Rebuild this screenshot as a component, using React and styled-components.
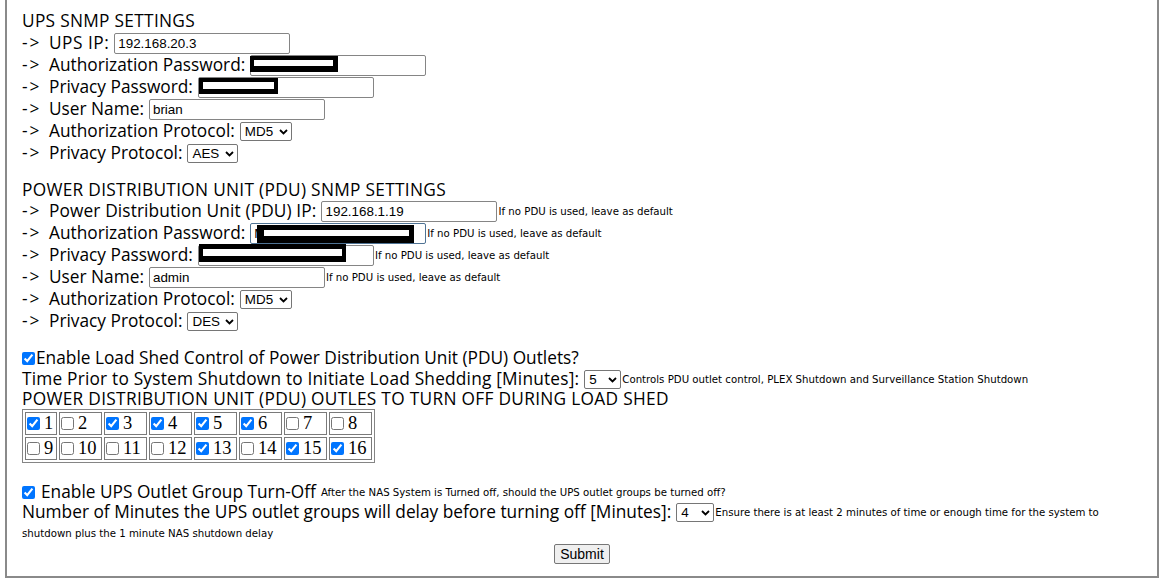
import React from "react";
import styled, { createGlobalStyle } from "styled-components";

const GlobalStyle = createGlobalStyle`
  html, body { margin: 0; padding: 0; background: #ffffff; }
  body { font-family: "Open Sans", "Liberation Sans", Arial, sans-serif; color: #000; }
`;

const Frame = styled.form`
  margin: 0 7px 5px 5px;
  border: 2px solid #8a8a8a;
  border-top: none;
  padding: 11px 15px 12px 15px;
  font-family: "Open Sans", "Liberation Sans", Arial, sans-serif;
  font-size: 17.3px;
  line-height: 1.08;
  color: #000;
`;

const Section = styled.div`
  margin-top: ${(p) => p.$gap || 0}px;
`;

const Row = styled.div`
  display: flex;
  align-items: center;
  justify-content: ${(p) => (p.$center ? "center" : "flex-start")};
  height: ${(p) => p.$h || 22}px;
  white-space: nowrap;
  letter-spacing: ${(p) => (p.$ls ? `${p.$ls}px` : "normal")};
`;

const Arrow = styled.span`
  display: inline-block;
  width: 27px;
  flex: none;
  letter-spacing: 2px;
`;

const FieldWrap = styled.span`
  position: relative;
  display: inline-flex;
  margin-left: ${(p) => (p.$ml === undefined ? 5 : p.$ml)}px;
  letter-spacing: normal;
`;

const TextField = styled.input`
  box-sizing: border-box;
  width: 176px;
  height: 21px;
  margin: 0;
  padding: 1px 3px;
  border: 1px solid ${(p) => (p.$focus ? "#4f7394" : "#858585")};
  border-radius: 2px;
  font: 13.4px "Liberation Sans", Arial, sans-serif;
  color: #000;
  background: #fff;
  outline: none;
`;

const Redaction = styled.span`
  position: absolute;
  box-sizing: border-box;
  background: #fff;
  border-style: solid;
  border-color: #000;
  pointer-events: none;
`;

const Select = styled.select`
  appearance: none;
  -webkit-appearance: none;
  box-sizing: border-box;
  height: 19px;
  margin: 0;
  padding: 0 0 0 4px;
  border: 1px solid #767676;
  border-radius: 2px;
  font: 13.4px "Liberation Sans", Arial, sans-serif;
  color: #000;
  background: #fff;
  outline: none;
`;

const Chevron = styled.svg`
  position: absolute;
  right: 4px;
  top: 7px;
  width: 9px;
  height: 6px;
  pointer-events: none;
`;

const Check = styled.input.attrs({ type: "checkbox" })`
  width: 13px;
  height: 13px;
  margin: 0 ${(p) => p.$mr || 0}px 0 0;
  accent-color: #0075ff;
  flex: none;
`;

const Note = styled.span`
  font: 10.2px "DejaVu Sans", Verdana, sans-serif;
  letter-spacing: normal;
  margin-left: ${(p) => (p.$ml === undefined ? 1 : p.$ml)}px;
  color: #000;
`;

const OutletGrid = styled.div`
  display: inline-grid;
  grid-template-columns: 32px repeat(7, 43px);
  grid-auto-rows: 23px;
  gap: 2px;
  padding: 2px;
  border: 1px solid #858585;
`;

const OutletCell = styled.label`
  box-sizing: border-box;
  display: flex;
  align-items: center;
  padding-left: 1px;
  border: 1px solid #7a7a7a;
  font: 18.5px "Liberation Serif", "Times New Roman", serif;
`;

const SubmitButton = styled.button`
  box-sizing: border-box;
  height: 20px;
  padding: 0 5px;
  font: 14px "Liberation Sans", Arial, sans-serif;
  color: #000;
  background: #efefef;
  border: 1px solid #767676;
  border-radius: 2px;
`;

function Field({ value, redact, focus }) {
  return (
    <FieldWrap>
      <TextField defaultValue={value} $focus={focus} />
      {redact && (
        <Redaction
          style={{
            left: redact.left,
            top: redact.top,
            width: redact.w,
            height: redact.h,
            borderWidth: redact.b,
          }}
        />
      )}
    </FieldWrap>
  );
}

function Dropdown({ value, options, width }) {
  return (
    <FieldWrap>
      <Select defaultValue={value} style={{ width }}>
        {options.map((o) => (
          <option key={o}>{o}</option>
        ))}
      </Select>
      <Chevron viewBox="0 0 9 6">
        <polyline points="1,1 4.5,4.5 8,1" fill="none" stroke="#000" strokeWidth="1.8" />
      </Chevron>
    </FieldWrap>
  );
}

function SettingRow({ label, ls, children }) {
  return (
    <Row>
      <Arrow>-&gt;</Arrow>
      <Row as="span" $h={22} $ls={ls}>{label}</Row>
      {children}
    </Row>
  );
}

const checked = [1, 3, 4, 5, 6, 13, 15, 16];
const minutes = ["1", "2", "3", "4", "5", "6", "7", "8", "9", "10"];
const pduNote = "If no PDU is used, leave as default";

export default function App() {
  return (
    <>
      <GlobalStyle />
      <Frame onSubmit={(e) => e.preventDefault()}>
        <Section>
          <Row $h={21} $ls={0.3}>UPS SNMP SETTINGS</Row>
          <SettingRow label="UPS IP:" ls={0.5}>
            <Field value="192.168.20.3" />
          </SettingRow>
          <SettingRow label="Authorization Password:">
            <Field value="" redact={{ left: 0, top: 1, w: 88, h: 16, b: "4px 5px 6px 4px" }} />
          </SettingRow>
          <SettingRow label="Privacy Password:">
            <Field value="" redact={{ left: 1, top: 1, w: 79, h: 16, b: "4px 4px 5px 4px" }} />
          </SettingRow>
          <SettingRow label="User Name:">
            <Field value="brian" />
          </SettingRow>
          <SettingRow label="Authorization Protocol:">
            <Dropdown value="MD5" options={["MD5", "SHA"]} width={52} />
          </SettingRow>
          <SettingRow label="Privacy Protocol:">
            <Dropdown value="AES" options={["AES", "DES"]} width={51} />
          </SettingRow>
        </Section>

        <Section $gap={16}>
          <Row $h={20} $ls={0.3}>POWER DISTRIBUTION UNIT (PDU) SNMP SETTINGS</Row>
          <SettingRow label="Power Distribution Unit (PDU) IP:" ls={0.12}>
            <Field value="192.168.1.19" />
            <Note>{pduNote}</Note>
          </SettingRow>
          <SettingRow label="Authorization Password:">
            <Field value="M" focus redact={{ left: 7, top: 2, w: 157, h: 18, b: "5px 5px 7px 7px" }} />
            <Note>{pduNote}</Note>
          </SettingRow>
          <SettingRow label="Privacy Password:">
            <Field value="" redact={{ left: 1, top: -1, w: 147, h: 18, b: "5px 4px 6px 4px" }} />
            <Note>{pduNote}</Note>
          </SettingRow>
          <SettingRow label="User Name:">
            <Field value="admin" />
            <Note>{pduNote}</Note>
          </SettingRow>
          <SettingRow label="Authorization Protocol:">
            <Dropdown value="MD5" options={["MD5", "SHA"]} width={52} />
          </SettingRow>
          <SettingRow label="Privacy Protocol:">
            <Dropdown value="DES" options={["AES", "DES"]} width={51} />
          </SettingRow>
        </Section>

        <Section $gap={16}>
          <Row $h={21}>
            <Check defaultChecked $mr={1} />
            Enable Load Shed Control of Power Distribution Unit (PDU) Outlets?
          </Row>
          <Row $h={21} $ls={0.2}>
            Time Prior to System Shutdown to Initiate Load Shedding [Minutes]:
            <Dropdown value="5" options={minutes} width={37} />
            <Note>Controls PDU outlet control, PLEX Shutdown and Surveillance Station Shutdown</Note>
          </Row>
          <Row $h={19} $ls={0.3}>POWER DISTRIBUTION UNIT (PDU) OUTLES TO TURN OFF DURING LOAD SHED</Row>
          <OutletGrid>
            {Array.from({ length: 16 }, (_, i) => i + 1).map((n) => (
              <OutletCell key={n}>
                <Check defaultChecked={checked.includes(n)} $mr={4} />
                {n}
              </OutletCell>
            ))}
          </OutletGrid>
        </Section>

        <Section $gap={19}>
          <Row $h={20}>
            <Check defaultChecked $mr={6} />
            Enable UPS Outlet Group Turn-Off
            <Note $ml={5}>After the NAS System is Turned off, should the UPS outlet groups be turned off?</Note>
          </Row>
          <Row $h={21}>
            Number of Minutes the UPS outlet groups will delay before turning off [Minutes]:
            <Dropdown value="4" options={minutes} width={38} />
            <Note>Ensure there is at least 2 minutes of time or enough time for the system to</Note>
          </Row>
          <Row $h={21}>
            <Note $ml={0}>shutdown plus the 1 minute NAS shutdown delay</Note>
          </Row>
          <Row $h={20} $center>
            <SubmitButton type="submit">Submit</SubmitButton>
          </Row>
        </Section>
      </Frame>
    </>
  );
}
